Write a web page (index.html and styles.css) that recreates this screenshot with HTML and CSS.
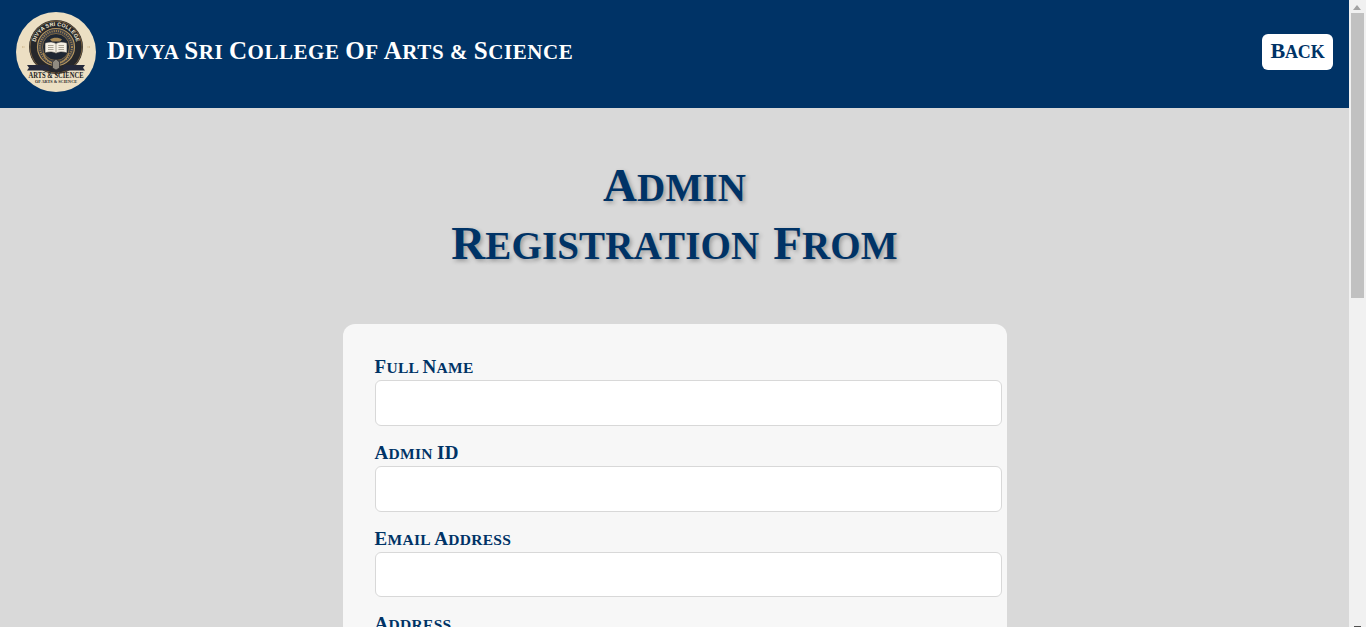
FILE: index.html
```html
<!DOCTYPE html>
<html lang="en">
<head>
<meta charset="utf-8">
<title>Admin Registration</title>
<link rel="stylesheet" href="styles.css">
</head>
<body>
<header class="topbar">
  <div class="brand">
    <svg class="logo" viewBox="0 0 80 80" width="80" height="80" aria-label="College seal">
      <circle cx="40" cy="40" r="40" fill="#ecdfc3"/>
      <circle cx="40" cy="35" r="27" fill="#26272b"/>
      <circle cx="40" cy="35" r="26" fill="none" stroke="#8a6c42" stroke-width=".8"/>
      <circle cx="40" cy="35" r="18.500" fill="#3d4048" stroke="#b59660" stroke-width="1.200"/>
      <circle cx="40" cy="35" r="16" fill="none" stroke="#a58550" stroke-width="2" stroke-dasharray="1 1.200"/>
      <circle cx="40" cy="35" r="13.500" fill="#1f2733" stroke="#8f7347" stroke-width=".8"/>
      <path id="arc" d="M19 35a21 21 0 0 1 42 0" fill="none"/>
      <text class="logo-arc"><textPath href="#arc" startOffset="50%" text-anchor="middle">DIVYA SRI COLLEGE</textPath></text>
      <path d="M29 31c4-1.500 8-1.500 11 .5 3-2 7-2 11-.5v10c-4-1.500-8-1.500-11 .5-3-2-7-2-11-.5z" fill="#f4efe3" stroke="#2c2c2c" stroke-width=".6"/>
      <path d="M40 32v9M32 33.500h5.500M32 35.500h5.500M32 37.500h5.500M42.500 33.500h5.500M42.500 35.500h5.500M42.500 37.500h5.500" stroke="#77705f" stroke-width=".6"/>
      <path d="M34 27.500c3-2.500 9-2.500 12 0l-2 2h-8z" fill="#a98a55"/>
      <path d="M27 41c2 6 7 10 13 11 6-1 11-5 13-11" fill="none" stroke="#a98a55" stroke-width="1.300"/>
      <path d="M36.500 50l3.500-3 3.500 3v6l-3.500 2-3.500-2z" fill="#8f8a80" stroke="#26272b" stroke-width=".7"/>
      <path d="M11 53h21l2 5.500H11l2-2.700zM69 53H48l-2 5.500h23l-2-2.700z" fill="#23283a"/>
      <text x="40" y="65.500" class="logo-main" text-anchor="middle" textLength="55" lengthAdjust="spacingAndGlyphs">ARTS &amp; SCIENCE</text>
      <text x="40" y="70.800" class="logo-sub" text-anchor="middle" textLength="42" lengthAdjust="spacingAndGlyphs">OF ARTS &amp; SCIENCE</text>
      <path d="M6 35h2.500M71.500 35H74" stroke="#c2a878" stroke-width="1.200" stroke-dasharray="1 .5"/>
    </svg>
    <h1 class="college"><span class="ini">D</span>ivya <span class="ini">S</span>ri <span class="ini">C</span>ollege <span class="ini">O</span>f <span class="ini">A</span>rts &amp; <span class="ini">S</span>cience</h1>
  </div>
  <a class="back" href="#"><span class="ini">B</span>ack</a>
</header>
<main class="page">
  <h2 class="title"><span class="ini">A</span>dmin<br><span class="ini">R</span>egistration <span class="ini">F</span>rom</h2>
  <form class="card">
    <div class="field"><label class="lbl" for="f1"><span class="ini">F</span>ull <span class="ini">N</span>ame</label><input class="inp" id="f1" type="text"></div>
    <div class="field"><label class="lbl" for="f2"><span class="ini">A</span>dmin <span class="ini">ID</span></label><input class="inp" id="f2" type="text"></div>
    <div class="field"><label class="lbl" for="f3"><span class="ini">E</span>mail <span class="ini">A</span>ddress</label><input class="inp" id="f3" type="email"></div>
    <div class="field"><label class="lbl" for="f4"><span class="ini">A</span>ddress</label><input class="inp" id="f4" type="text"></div>
    <div class="field"><label class="lbl" for="f5"><span class="ini">P</span>hone <span class="ini">N</span>umber</label><input class="inp" id="f5" type="tel"></div>
    <div class="field"><label class="lbl" for="f6"><span class="ini">U</span>sername</label><input class="inp" id="f6" type="text"></div>
    <div class="field"><label class="lbl" for="f7"><span class="ini">P</span>assword</label><input class="inp" id="f7" type="password"></div>
    <div class="field"><label class="lbl" for="f8"><span class="ini">C</span>onfirm <span class="ini">P</span>assword</label><input class="inp" id="f8" type="password"></div>
    <button class="submit" type="button">Register</button>
  </form>
</main>
<div class="scrollbar" aria-hidden="true">
  <span class="arrow-up"></span>
  <span class="thumb"></span>
  <span class="arrow-down"></span>
</div>
</body>
</html>
```
FILE: styles.css
```css
* { margin: 0; }
body {
  margin-right: 17px;
  background: #d9d9d9;
  font-family: "Liberation Serif", "Times New Roman", serif;
  color: #003366;
}
.ini { line-height: 1; }
.topbar {
  height: 108px;
  box-sizing: border-box;
  padding: 12px 16px 16px;
  background: #003366;
  display: flex;
  justify-content: space-between;
  align-items: center;
}
.brand { display: flex; align-items: center; gap: 11px; }
.logo { display: block; width: 80px; height: 80px; }
.logo-arc { font: 700 5.4px "Liberation Sans", sans-serif; fill: #f1e7d2; letter-spacing: .1px; }
.logo-main { font: 700 8px "Liberation Serif", serif; fill: #1d1d1f; }
.logo-sub { font: 700 3.8px "Liberation Serif", serif; fill: #2a2a2c; }
.college {
  color: #fff;
  font-size: 21px;
  line-height: 36px;
  font-weight: 700;
  text-transform: uppercase;
  letter-spacing: .55px;
}
.college .ini { font-size: 25px; }
.back {
  display: block;
  background: #fff;
  color: #003366;
  width: 71px;
  height: 36px;
  line-height: 36px;
  text-align: center;
  border-radius: 6px;
  font-size: 18px;
  font-weight: 700;
  text-transform: uppercase;
  letter-spacing: -.2px;
  text-decoration: none;
}
.back .ini { font-size: 22px; }
.page { padding: 51px 0 40px; }
.title {
  text-align: center;
  font-size: 39px;
  line-height: 58px;
  font-weight: 700;
  text-transform: uppercase;
  letter-spacing: .15px;
  word-spacing: 4px;
  color: #003366;
  text-shadow: 2px 2px 4px rgba(0, 0, 0, .3);
}
.title .ini { font-size: 47px; }
.card {
  width: 664px;
  box-sizing: border-box;
  margin: 49px auto 0;
  padding: 32px;
  background: #f7f7f7;
  border-radius: 12px;
}
.field { margin-bottom: 16px; }
.lbl {
  display: block;
  height: 24.2px;
  line-height: 24px;
  font-size: 15.5px;
  font-weight: 700;
  text-transform: uppercase;
  letter-spacing: .3px;
}
.lbl .ini { font-size: 19px; }
.inp {
  display: block;
  width: 100%;
  box-sizing: content-box;
  height: 21.6px;
  padding: 11px 12.5px;
  border: 1px solid #d8d8d8;
  border-radius: 6px;
  background: #fff;
  font-size: 16px;
}
.submit {
  display: block;
  width: 100%;
  height: 46px;
  margin-top: 24px;
  border: 0;
  border-radius: 6px;
  background: #003366;
  color: #fff;
  font: 700 20px "Liberation Serif", serif;
}
.scrollbar {
  position: fixed;
  top: 0;
  right: 0;
  bottom: 0;
  width: 17px;
  background: #f1f1f1;
}
.thumb {
  position: absolute;
  left: 2px;
  top: 13px;
  width: 13px;
  height: 285px;
  background: #c1c1c1;
}
.arrow-up {
  position: absolute;
  left: 4px;
  top: 5px;
  border-left: 4.5px solid transparent;
  border-right: 4.5px solid transparent;
  border-bottom: 5px solid #a3a3a3;
}
.arrow-down {
  position: absolute;
  left: 5px;
  top: 626px;
  width: 7px;
  height: 1px;
  background: #505050;
}
```
